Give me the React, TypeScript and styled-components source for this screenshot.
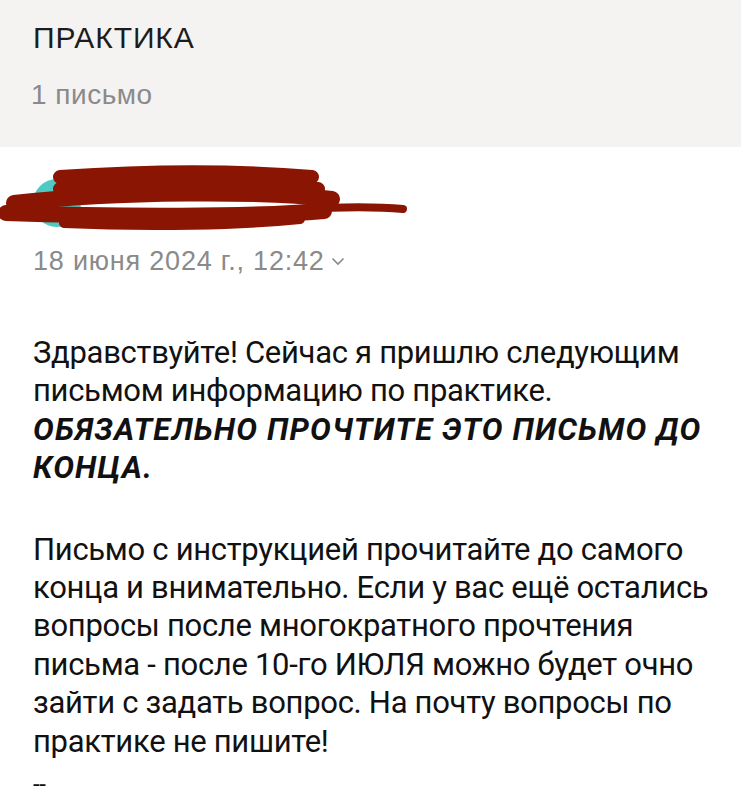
import styled, { createGlobalStyle } from "styled-components";

const GlobalStyle = createGlobalStyle`
  html, body {
    margin: 0;
    padding: 0;
    background: #ffffff;
  }
  body {
    font-family: "Liberation Sans", Arial, sans-serif;
    -webkit-font-smoothing: antialiased;
  }
`;

const Page = styled.div`
  width: 741px;
  height: 800px;
  overflow: hidden;
  background: #ffffff;
`;

const Header = styled.header`
  background: #f4f3f2;
  height: 147px;
  padding: 21px 0 0 33px;
  box-sizing: border-box;
  display: flex;
  flex-direction: column;
  gap: 24px;
`;

const Title = styled.h1`
  margin: 0;
  font-family: "Liberation Sans", Arial, sans-serif;
  font-weight: 400;
  font-size: 30px;
  line-height: 34px;
  color: #1c1c1c;
  letter-spacing: 0.9px;
`;

const Count = styled.div`
  font-size: 28px;
  line-height: 32px;
  color: #8a8a8a;
  margin-left: -2px;
  letter-spacing: 0.5px;
`;

const Sender = styled.div`
  height: 76px;
  margin-top: 14px;
`;

const Scribble = styled.svg`
  display: block;
`;

const DateRow = styled.div`
  display: flex;
  align-items: center;
  gap: 6px;
  padding-left: 33px;
  margin-top: 9px;
  font-size: 27px;
  line-height: 30px;
  color: #8a8a8a;
  letter-spacing: 0.8px;
`;

const Body = styled.div`
  padding: 0 30px 0 33px;
  margin-top: 58px;
  font-family: Roboto, "Liberation Sans", sans-serif;
  font-size: 31px;
  line-height: 38.4px;
  color: #111111;
  letter-spacing: -0.3px;
`;

const Paragraph = styled.p<{ gapAfter?: boolean }>`
  margin: 0 0 ${({ gapAfter }) => (gapAfter ? "43px" : "0")};
`;

const Strong = styled.span`
  font-weight: 700;
  font-style: italic;
  letter-spacing: 1.2px;
`;

const Dashes = styled.div`
  line-height: 46px;
  font-size: 24px;
`;

export default function App() {
  return (
    <Page>
      <GlobalStyle />
      <Header>
        <Title>ПРАКТИКА</Title>
        <Count>1 письмо</Count>
      </Header>
      <Sender>
        <Scribble width="420" height="76" viewBox="0 0 420 76">
          <circle cx="57" cy="42" r="24" fill="#4fc9c4" />
          <g stroke="#8a1502" strokeLinecap="round" fill="none">
            <path d="M60 16 C 150 10, 240 10, 312 16" strokeWidth="14" />
            <path d="M60 28 C 150 22, 250 22, 318 28" strokeWidth="14" />
            <path d="M14 42 C 120 30, 260 30, 332 38" strokeWidth="16" />
            <path d="M6 52 C 120 56, 250 56, 324 50" strokeWidth="16" />
            <path d="M64 62 C 150 66, 240 64, 300 58" strokeWidth="10" />
            <path d="M300 48 C 340 46, 380 46, 403 48" strokeWidth="8" />
          </g>
        </Scribble>
      </Sender>
      <DateRow>
        <span>18 июня 2024 г., 12:42</span>
        <svg width="14" height="10" viewBox="0 0 14 10">
          <path d="M1.5 2.5 L7 8 L12.5 2.5" stroke="#8a8a8a" strokeWidth="1.6" fill="none" />
        </svg>
      </DateRow>
      <Body>
        <Paragraph gapAfter>
          Здравствуйте! Сейчас я пришлю следующим письмом информацию по практике.{" "}
          <Strong>ОБЯЗАТЕЛЬНО ПРОЧТИТЕ ЭТО ПИСЬМО ДО КОНЦА.</Strong>
        </Paragraph>
        <Paragraph>
          Письмо с инструкцией прочитайте до самого конца и внимательно. Если у вас ещё остались
          вопросы после многократного прочтения письма - после 10-го ИЮЛЯ можно будет очно зайти
          с задать вопрос. На почту вопросы по практике не пишите!
        </Paragraph>
        <Dashes>--</Dashes>
      </Body>
    </Page>
  );
}
